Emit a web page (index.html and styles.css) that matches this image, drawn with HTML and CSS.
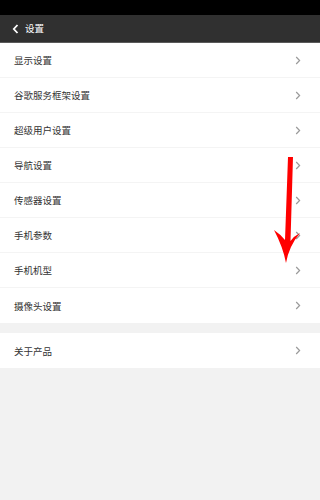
FILE: index.html
```html
<!DOCTYPE html>
<html lang="zh">
<head>
<meta charset="utf-8">
<link rel="stylesheet" href="styles.css">
</head>
<body>
<div class="page">
  <div class="statusbar"></div>
  <div class="header">
    <svg class="back" width="7" height="10" viewBox="0 0 7 10"><path d="M5.5 1 L1.8 5 L5.5 9" fill="none" stroke="#fff" stroke-width="1.8"/></svg>
    <span class="title">设置</span>
  </div>
  <div class="group">
    <div class="row"><span>显示设置</span><svg class="chev" width="6" height="9" viewBox="0 0 6 9"><path d="M1.2 1 L4.6 4.5 L1.2 8" fill="none" stroke="#9a9a9a" stroke-width="1.2"/></svg></div>
    <div class="row"><span>谷歌服务框架设置</span><svg class="chev" width="6" height="9" viewBox="0 0 6 9"><path d="M1.2 1 L4.6 4.5 L1.2 8" fill="none" stroke="#9a9a9a" stroke-width="1.2"/></svg></div>
    <div class="row"><span>超级用户设置</span><svg class="chev" width="6" height="9" viewBox="0 0 6 9"><path d="M1.2 1 L4.6 4.5 L1.2 8" fill="none" stroke="#9a9a9a" stroke-width="1.2"/></svg></div>
    <div class="row"><span>导航设置</span><svg class="chev" width="6" height="9" viewBox="0 0 6 9"><path d="M1.2 1 L4.6 4.5 L1.2 8" fill="none" stroke="#9a9a9a" stroke-width="1.2"/></svg></div>
    <div class="row"><span>传感器设置</span><svg class="chev" width="6" height="9" viewBox="0 0 6 9"><path d="M1.2 1 L4.6 4.5 L1.2 8" fill="none" stroke="#9a9a9a" stroke-width="1.2"/></svg></div>
    <div class="row"><span>手机参数</span><svg class="chev" width="6" height="9" viewBox="0 0 6 9"><path d="M1.2 1 L4.6 4.5 L1.2 8" fill="none" stroke="#9a9a9a" stroke-width="1.2"/></svg></div>
    <div class="row"><span>手机机型</span><svg class="chev" width="6" height="9" viewBox="0 0 6 9"><path d="M1.2 1 L4.6 4.5 L1.2 8" fill="none" stroke="#9a9a9a" stroke-width="1.2"/></svg></div>
    <div class="row last"><span>摄像头设置</span><svg class="chev" width="6" height="9" viewBox="0 0 6 9"><path d="M1.2 1 L4.6 4.5 L1.2 8" fill="none" stroke="#9a9a9a" stroke-width="1.2"/></svg></div>
  </div>
  <div class="group">
    <div class="row last"><span>关于产品</span><svg class="chev" width="6" height="9" viewBox="0 0 6 9"><path d="M1.2 1 L4.6 4.5 L1.2 8" fill="none" stroke="#9a9a9a" stroke-width="1.2"/></svg></div>
  </div>
  <svg class="red-arrow" width="30" height="110" viewBox="197 155 30 110">
    <path d="M213 157 L218 157 L215.5 241 Q219 236 225 233 Q214 246 211 263 Q208 247 199 230 Q205 234 210 240 Z" fill="#ff0000"/>
  </svg>
</div>
</body>
</html>
```
FILE: styles.css
```css
html, body {
  margin: 0;
  padding: 0;
  background: #f2f2f2;
}
.page {
  position: relative;
  width: 100%;
  min-height: 500px;
  background: #f2f2f2;
  font-family: "Noto Sans CJK SC", "Noto Sans", sans-serif;
  overflow: hidden;
}
.statusbar {
  height: 15px;
  background: #000;
}
.header {
  height: 27px;
  background: #303030;
  border-bottom: 1px solid #5a5a5a;
  display: flex;
  align-items: center;
  padding-left: 12px;
  gap: 6px;
}
.back {
  display: block;
}
.title {
  color: #fff;
  font-size: 9.5px;
  line-height: 1;
}
.group {
  background: #fff;
  margin-bottom: 10px;
}
.row {
  height: 34px;
  border-bottom: 1px solid #f4f4f4;
  display: flex;
  align-items: center;
  justify-content: space-between;
  padding: 0 19px 0 14px;
  font-size: 9.5px;
  color: #333;
}
.row.last {
  height: 35px;
  border-bottom: none;
}
.chev {
  display: block;
}
.red-arrow {
  position: absolute;
  right: 18px;
  top: 155px;
  pointer-events: none;
}
```
